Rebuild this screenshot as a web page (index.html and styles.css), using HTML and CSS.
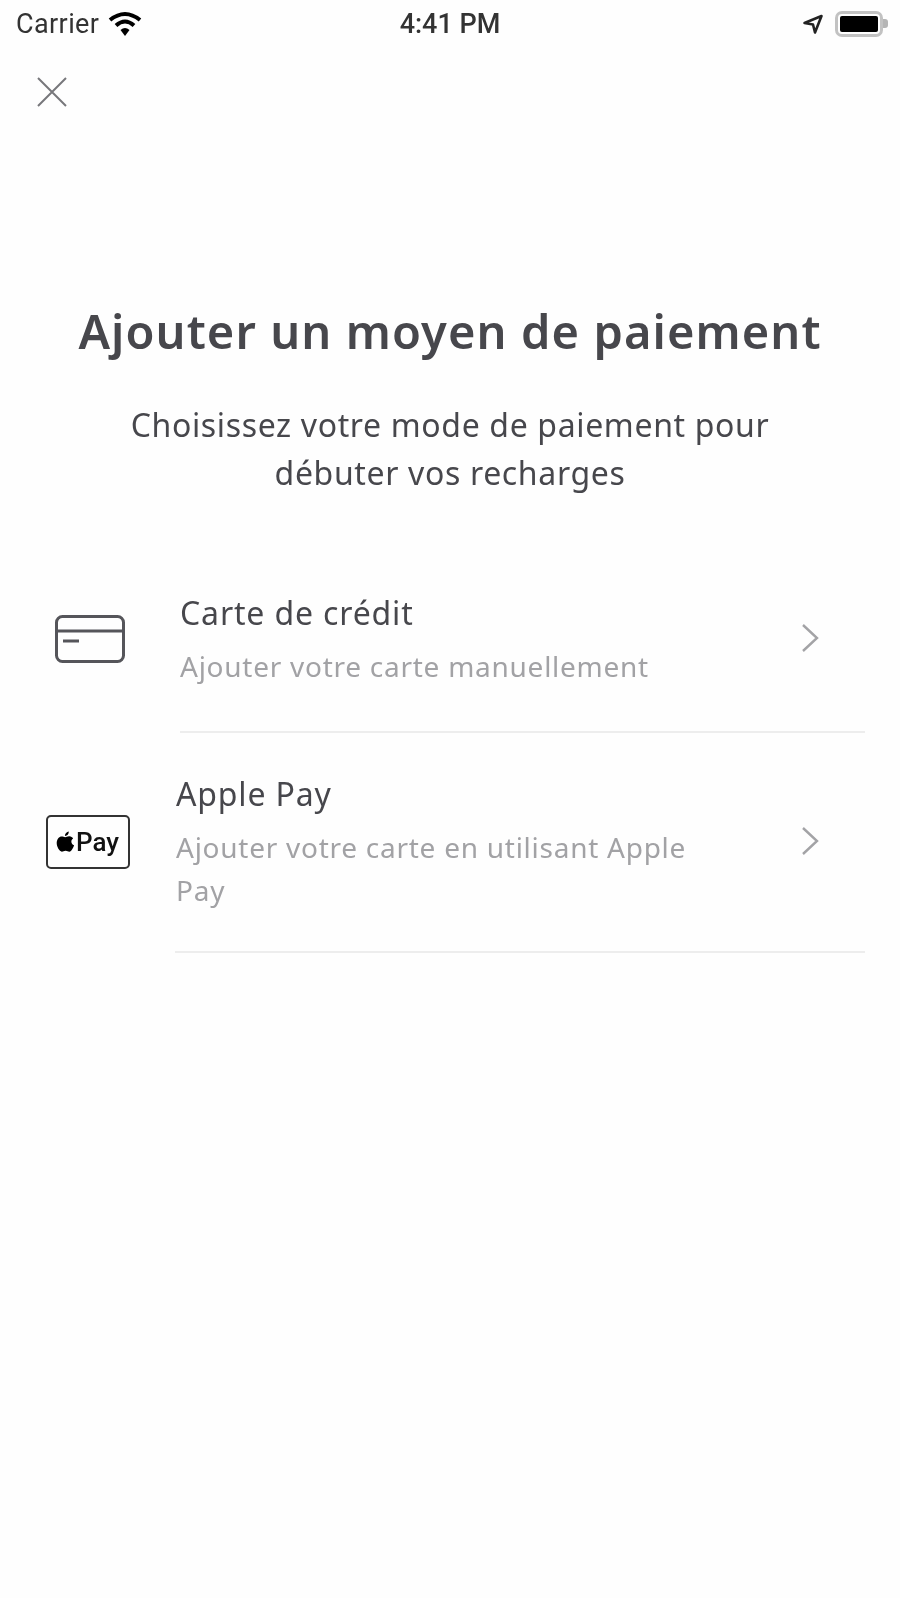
FILE: index.html
```html
<!DOCTYPE html>
<html>

<head>
    <meta charset="UTF-8">
    <title>Ajouter un moyen de paiement</title>
    <link rel="stylesheet" href="styles.css">
</head>

<body>
    <div class="status-bar">
        <div class="status-left">
            <span class="carrier">Carrier</span>
            <svg class="wifi" width="34" height="26" viewBox="0 0 34 26">
                <path d="M2 9 Q17 -3 32 9" fill="none" stroke="#000" stroke-width="4" />
                <path d="M8 14.5 Q17 6.5 26 14.5" fill="none" stroke="#000" stroke-width="4" />
                <path d="M12.5 19 L17 25 L21.5 19 Q17 15 12.5 19 Z" fill="#000" />
            </svg>
        </div>
        <span class="clock">4:41 PM</span>
        <div class="status-right">
            <svg class="arrow" width="22" height="22" viewBox="0 0 22 22">
                <path d="M2.5 10 L19.5 3 L13 19.5 L11 11.5 Z" fill="none" stroke="#222" stroke-width="2.6" stroke-linejoin="round" />
            </svg>
            <div class="battery"><div class="battery-fill"></div></div>
            <div class="battery-cap"></div>
        </div>
    </div>

    <div class="close-row">
        <svg width="32" height="32" viewBox="0 0 32 32">
            <path d="M2 2 L30 30 M30 2 L2 30" fill="none" stroke="#77777b" stroke-width="2" />
        </svg>
    </div>

    <div class="intro">
        <h1>Ajouter un moyen de paiement</h1>
        <p>Choisissez votre mode de paiement pour<br>débuter vos recharges</p>
    </div>

    <div class="methods">
        <div class="method method-card">
            <div class="method-icon">
                <svg width="70" height="48" viewBox="0 0 70 48">
                    <rect x="1.5" y="1.5" width="67" height="45" rx="6" fill="none" stroke="#55555a" stroke-width="3" />
                    <path d="M1.5 16 H68.5" stroke="#55555a" stroke-width="3" />
                    <path d="M8 26 H24" stroke="#55555a" stroke-width="3" />
                </svg>
            </div>
            <div class="method-body">
                <div class="method-text">
                    <div class="method-title">Carte de crédit</div>
                    <div class="method-desc">Ajouter votre carte manuellement</div>
                </div>
                <svg class="chevron" width="18" height="30" viewBox="0 0 18 30">
                    <path d="M2 2 L16 15 L2 28" fill="none" stroke="#a3a3a6" stroke-width="2.4" />
                </svg>
            </div>
        </div>
        <div class="method method-apple">
            <div class="method-icon">
                <div class="apple-badge">
                    <svg width="19" height="22" viewBox="0 0 17 20">
                        <path d="M11.5 0.5 C11.6 2.8 9.9 4.6 8 4.5 C7.9 2.4 9.6 0.6 11.5 0.5 Z" fill="#000" />
                        <path d="M8.2 5.6 C9.2 5.6 10.4 4.7 12 4.8 C13.5 4.9 14.7 5.6 15.4 6.8 C13 8.2 13.4 11.8 16.3 13 C15.6 15.1 13.9 18.8 12 18.8 C10.8 18.8 10.2 18 8.6 18 C7 18 6.4 18.8 5.2 18.8 C3 18.8 0.5 14.4 0.5 11 C0.5 7.4 2.8 5 5 5 C6.3 5 7.3 5.6 8.2 5.6 Z" fill="#000" />
                    </svg>
                    <span>Pay</span>
                </div>
            </div>
            <div class="method-body">
                <div class="method-text">
                    <div class="method-title">Apple Pay</div>
                    <div class="method-desc">Ajouter votre carte en utilisant Apple<br>Pay</div>
                </div>
                <svg class="chevron" width="18" height="30" viewBox="0 0 18 30">
                    <path d="M2 2 L16 15 L2 28" fill="none" stroke="#a3a3a6" stroke-width="2.4" />
                </svg>
            </div>
        </div>
    </div>
</body>

</html>
```

FILE: styles.css
```css
body {
    margin: 0;
    background-color: #fefefe;
    font-family: "Noto Sans", sans-serif;
    color: #47474c;
    /* the source is a soft, upscaled capture */
    filter: blur(0.6px);
}

.status-bar {
    height: 47px;
    padding: 0 12px 1px 16px;
    display: flex;
    align-items: center;
    justify-content: space-between;
    font-family: Roboto, sans-serif;
    font-size: 27px;
    color: #333;
}

.status-left,
.status-right {
    display: flex;
    align-items: center;
}

.status-left {
    width: 200px;
}

.status-right {
    width: 204px;
    justify-content: flex-end;
}

.carrier {
    letter-spacing: 0.4px;
}

.wifi {
    margin-left: 9px;
}

.clock {
    font-weight: 500;
}

.arrow {
    margin-right: 11px;
}

.battery {
    width: 48px;
    height: 26px;
    box-sizing: border-box;
    border: 3px solid #c2c2c2;
    border-radius: 7px;
    padding: 2px;
}

.battery-fill {
    height: 100%;
    background-color: #000;
    border-radius: 2px;
}

.battery-cap {
    width: 5px;
    height: 9px;
    background-color: #b5b5b5;
    border-radius: 0 3px 3px 0;
}

.close-row {
    padding: 28px 0 0 36px;
    height: 32px;
}

.intro {
    margin-top: 193px;
    text-align: center;
}

.intro h1 {
    margin: 0;
    font-size: 47px;
    line-height: 60px;
    font-weight: 600;
    letter-spacing: 1.1px;
}

.intro p {
    margin: 40px 0 0;
    font-size: 32px;
    line-height: 48px;
    letter-spacing: 0.65px;
}

.methods {
    margin-top: 48px;
    padding-right: 35px;
}

.method {
    display: flex;
}

.method-icon {
    display: flex;
    align-items: center;
    justify-content: center;
    flex-shrink: 0;
}

.method-card .method-icon {
    width: 180px;
}

.method-apple .method-icon {
    width: 175px;
    padding-bottom: 2px;
}

.method-body {
    flex-grow: 1;
    display: flex;
    align-items: center;
    justify-content: space-between;
    border-bottom: 2px solid #ededed;
    padding-right: 46px;
}

.method-card .method-body {
    height: 186px;
}

.method-apple .method-body {
    height: 216px;
    padding-bottom: 2px;
}

.method-text {
    padding-top: 3px;
}

.method-apple .method-text {
    margin-left: 1px;
}

.method-title {
    font-size: 32px;
    line-height: 42px;
    letter-spacing: 0.85px;
}

.method-desc {
    margin-top: 11px;
    font-size: 28px;
    line-height: 43px;
    letter-spacing: 0.74px;
    color: #a2a2a5;
}

.apple-badge {
    width: 84px;
    height: 54px;
    box-sizing: border-box;
    border: 2px solid #333;
    border-radius: 5px;
    display: flex;
    align-items: center;
    justify-content: center;
    gap: 1px;
    font-family: Roboto, sans-serif;
    font-size: 26px;
    font-weight: 500;
    color: #111;
}
```
